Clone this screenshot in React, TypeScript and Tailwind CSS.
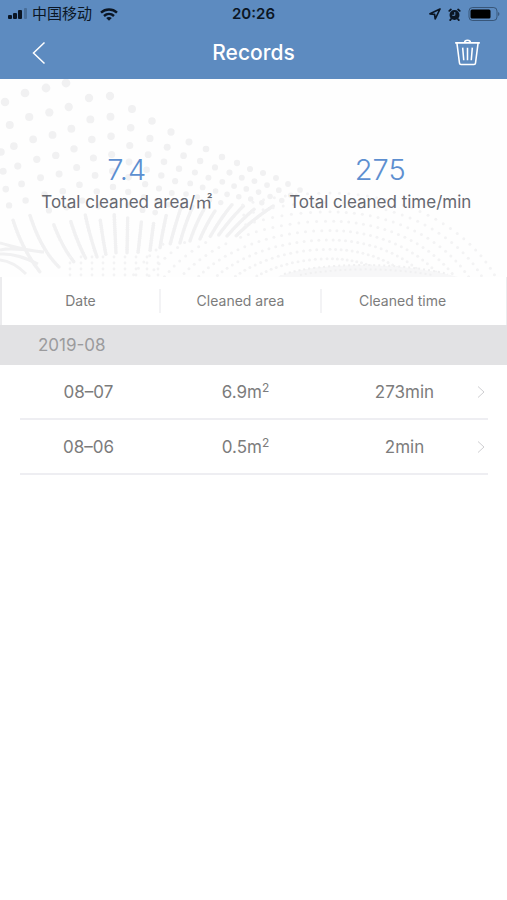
import { Fragment } from 'react';

type Strand = [number, number, number, number, number, number, number, number];
type Dot = { x: number; y: number; r: number };

const groups = [
  {
    month: '2019-08',
    records: [
      { date: '08–07', area: '6.9', time: '273min' },
      { date: '08–06', area: '0.5', time: '2min' },
    ],
  },
];

// Cubic curves (start, two handles, end) that the big dots run along
const strands: Strand[] = [
  [1, 73, 6, 126, 15, 161, 40, 193],
  [5, 23, 20, 91, 25, 156, 60, 189],
  [25, 14, 38, 86, 45, 146, 74, 183],
  [46, 9, 55, 76, 63, 136, 86, 180],
  [66, 4, 74, 76, 82, 136, 97, 178],
  [89, 19, 92, 71, 98, 136, 106, 176],
  [110, 17, 111, 71, 114, 131, 116, 175],
  [132, 30, 128, 81, 128, 131, 127, 175],
  [152, 42, 147, 81, 143, 131, 138, 174],
  [171, 53, 162, 86, 155, 131, 150, 172],
  [189, 63, 177, 91, 166, 131, 160, 169],
  [206, 70, 193, 96, 180, 126, 170, 166],
  [222, 78, 205, 103, 190, 126, 180, 164],
  [237, 84, 220, 106, 202, 126, 190, 162],
  [250, 90, 232, 109, 215, 126, 200, 160],
  [263, 94, 245, 111, 228, 126, 210, 158],
  [276, 99, 258, 113, 238, 129, 218, 157],
  [288, 105, 270, 117, 250, 131, 227, 157],
  [300, 111, 282, 121, 258, 135, 236, 157],
];

function cubic(a: number, b: number, c: number, d: number, t: number) {
  const u = 1 - t;
  return u * u * u * a + 3 * u * u * t * b + 3 * u * t * t * c + t * t * t * d;
}

// Dots shrink on the way down, then run together into a line near the fold
function strandDots(s: Strand): Dot[] {
  const dots: Dot[] = [];
  let travelled = 0;
  let next = 0;
  let px = s[0];
  let py = s[1];
  for (let i = 0; i <= 300; i++) {
    const t = i / 300;
    const x = cubic(s[0], s[2], s[4], s[6], t);
    const y = cubic(s[1], s[3], s[5], s[7], t);
    travelled += Math.hypot(x - px, y - py);
    px = x;
    py = y;
    if (travelled >= next) {
      const fold = s[0] > 200 ? 124 : 134;
      const depth = Math.min(1, Math.max(0, y / fold));
      const reach = Math.min(1, Math.max(0, (s[0] - 40) / 170));
      const solid = y > fold;
      dots.push({ x, y, r: solid ? 1.8 : 4.5 - depth * 1.4 - reach * 0.4 });
      next = travelled + (solid ? 1.5 : (25 - reach * 8) * (1 - depth * 0.42));
    }
  }
  return dots;
}

// Rows of fine dots that fan out around the low hill on the right
function fanDots(): Dot[] {
  const dots: Dot[] = [];
  for (let k = 0; k < 9; k++) {
    const scale = 1 - k * 0.068;
    const steps = 60;
    for (let i = 0; i <= steps; i++) {
      const angle = Math.PI * ((i + (k % 2) * 0.5) / steps);
      const rx = Math.cos(angle) < 0 ? 215 : 180;
      const x = 330 + Math.cos(angle) * rx * scale;
      const y = 252 - Math.sin(angle) * 138 * scale;
      if (y < 198 && !(x < 240 && y < 162)) dots.push({ x, y, r: 1.5 });
    }
  }
  return dots;
}

function footDots(): Dot[] {
  const dots: Dot[] = [];
  for (let row = 0; row < 4; row++) {
    for (let col = 0; col < 9; col++) {
      dots.push({ x: 70 + col * 11, y: 178 + row * 6, r: 1.4 });
    }
  }
  return dots;
}

const bigDots = strands.flatMap(strandDots);
const fineDots = [...fanDots(), ...footDots()];

function DotWave() {
  return (
    <svg
      viewBox="0 0 507 198"
      preserveAspectRatio="xMidYMin slice"
      className="absolute inset-0 h-full w-full"
      aria-hidden="true"
    >
      <g fill="#f1f1f2">
        {bigDots.map((d, i) => <circle key={i} cx={d.x} cy={d.y} r={d.r} />)}
      </g>
      <g fill="#f3f3f4">
        {fineDots.map((d, i) => <circle key={i} cx={d.x} cy={d.y} r={d.r} />)}
      </g>
      <path d="M0 171c12-3 28 0 42 2M0 175c14-1 26 4 38 10M0 181c10 1 18 6 26 14M0 164c12 3 26 8 44 9" fill="none" stroke="#f1f1f2" strokeWidth="3" />
      <path d="M278 198c30-14 118-17 180 0z" fill="#f7f7f8" />
      <path d="M284 195c36-11 110-13 164 0M300 196c36-7 88-8 132 0" fill="none" stroke="#f0f0f1" strokeWidth="2" strokeDasharray="2 3" />
    </svg>
  );
}

function StatusBar() {
  return (
    <div className="grid h-7 grid-cols-3 items-center px-1.5 text-[#0b1624]">
      <div className="flex items-center gap-1 pl-0.5">
        <svg width="20" height="12" viewBox="0 0 20 12" fill="currentColor" aria-hidden="true">
          <rect x="0" y="7" width="4" height="4" rx="1" />
          <rect x="5" y="5" width="4" height="6" rx="1" />
          <rect x="10" y="2" width="4" height="9" rx="1" />
          <rect x="16" y="0" width="3" height="11" rx="1" opacity="0.25" />
        </svg>
        <span className="text-[15px] leading-5 whitespace-nowrap">中国移动</span>
        <svg className="ml-1" width="18" height="13" viewBox="0 0 18 13" fill="none" stroke="currentColor" strokeWidth="2.4" aria-hidden="true">
          <path d="M1 4.600c4.500-4.200 11.500-4.200 16 0" />
          <path d="M4 8c2.900-2.700 7.100-2.700 10 0" />
          <path d="M9 12.800 6.200 10c1.600-1.400 4-1.400 5.600 0z" fill="currentColor" stroke="none" />
        </svg>
      </div>
      <span className="text-center text-[15px] leading-5 font-semibold">20:26</span>
      <div className="flex items-center justify-end gap-[7px]">
        <svg width="12" height="12" viewBox="0 0 12 12" fill="none" stroke="currentColor" strokeWidth="1.700" strokeLinejoin="round" aria-hidden="true">
          <path d="M11 1 1 5.800l4.600.6.600 4.600z" />
        </svg>
        <svg width="13" height="13" viewBox="0 0 13 13" aria-hidden="true">
          <circle cx="6.500" cy="7" r="5" fill="currentColor" />
          <path d="M1.300 2.900 2.900 1.500M11.700 2.900 10.100 1.500M3 11.100l-.8 1M10 11.100l.8 1" stroke="currentColor" strokeWidth="1.800" strokeLinecap="round" />
          <path d="M6.800 4v3.300H4.300" fill="none" stroke="#5d8bc0" strokeWidth="1" />
        </svg>
        <svg width="33" height="14" viewBox="0 0 33 14" aria-hidden="true">
          <rect x="1" y="0.500" width="28" height="13" rx="3.500" fill="none" stroke="currentColor" strokeOpacity="0.45" />
          <rect x="2.500" y="2.500" width="20" height="9" rx="1.500" fill="#000" />
          <path d="M30.200 5v4c1.600-.6 1.600-3.400 0-4z" fill="currentColor" opacity="0.500" />
        </svg>
      </div>
    </div>
  );
}

function NavBar() {
  return (
    <div className="grid h-[51px] grid-cols-3 items-center px-[26px] pb-0.5">
      <button type="button" aria-label="Back" className="flex w-6 pl-1.5 text-white">
        <svg className="shrink-0" width="14" height="24" viewBox="0 0 14 24" fill="none" stroke="currentColor" strokeWidth="1.500" aria-hidden="true">
          <path d="M12.500 1.500 1.500 12l11 10.500" />
        </svg>
      </button>
      <h1 className="text-center text-[21px] leading-6 font-medium text-white">Records</h1>
      <button type="button" aria-label="Delete records" className="flex justify-self-end text-white">
        <svg width="27" height="27" viewBox="0 0 28 28" fill="none" stroke="currentColor" strokeWidth="1.600" strokeLinejoin="round" aria-hidden="true">
          <path d="M1.200 4h25.600M11 3.700c0-3.200 6-3.200 6 0" />
          <path d="M3 4l2.700 21c.1 1 .6 1.500 1.500 1.500h13.600c.9 0 1.400-.5 1.500-1.500L25 4" />
          <path d="m9 9 1.100 13M14 9v13M19 9l-1.100 13" />
        </svg>
      </button>
    </div>
  );
}

export default function App() {
  return (
    <div className="min-h-screen bg-white font-['Inter','Noto_Sans_CJK_SC',sans-serif] text-[#7c7c7c]">
      <header className="bg-[#5d8bc0]">
        <StatusBar />
        <NavBar />
      </header>

      <section className="relative overflow-hidden bg-[#fefefe]">
        <DotWave />
        <dl className="relative grid grid-cols-2 pt-[73px] pb-[63px] text-center">
          <div className="flex flex-col-reverse gap-0.5">
            <dt className="text-[17px] leading-6 text-[#666870]">Total cleaned area/㎡</dt>
            <dd className="text-[29px] leading-9 font-light text-[#5d8fd0]">7.4</dd>
          </div>
          <div className="flex flex-col-reverse gap-0.5">
            <dt className="text-[17px] leading-6 text-[#666870]">Total cleaned time/min</dt>
            <dd className="text-[29px] leading-9 font-light text-[#5d8fd0]">275</dd>
          </div>
        </dl>
      </section>

      <table className="w-full table-fixed border-separate border-spacing-0 text-center">
        <colgroup>
          <col />
          <col />
          <col />
          <col className="w-6" />
        </colgroup>
        <thead className="text-[14px] leading-6">
          <tr>
            <th scope="col" className="border-l-2 border-[#ececee] py-3 font-normal">
              <div className="border-r-2 border-[#f3f3f5]">Date</div>
            </th>
            <th scope="col" className="py-3 font-normal">
              <div className="border-r-2 border-[#f3f3f5]">Cleaned area</div>
            </th>
            <th scope="col" className="py-3 font-normal">Cleaned time</th>
            <td className="border-r border-[#ececee]" />
          </tr>
        </thead>
        <tbody className="text-[17px] leading-6">
          {groups.map((group) => (
            <Fragment key={group.month}>
              <tr className="bg-[#e2e2e4]">
                <th scope="rowgroup" colSpan={4} className="py-2 pl-[38px] text-left font-normal text-[#9b9b9d]">
                  {group.month}
                </th>
              </tr>
              {group.records.map((row) => (
                <tr key={row.date}>
                  <td>
                    <div className="ml-5 h-[55px] border-b-2 border-[#eeeef2] pt-[15px] pr-1">{row.date}</div>
                  </td>
                  <td>
                    <div className="h-[55px] border-b-2 border-[#eeeef2] pt-[15px] pl-2">
                      {row.area}m<sup className="text-[12px]">2</sup>
                    </div>
                  </td>
                  <td>
                    <div className="h-[55px] border-b-2 border-[#eeeef2] pt-[15px] pl-1">{row.time}</div>
                  </td>
                  <td>
                    <div className="mr-[19px] flex h-[55px] items-center justify-end border-b-2 border-[#eeeef2]">
                      <button type="button" aria-label={`Open ${row.date}`} className="mr-[3px] shrink-0 text-[#cfcfd2]">
                        <svg width="8" height="14" viewBox="0 0 8 14" fill="none" stroke="currentColor" aria-hidden="true">
                          <path d="m1 1.500 6 5.500-6 5.500" />
                        </svg>
                      </button>
                    </div>
                  </td>
                </tr>
              ))}
            </Fragment>
          ))}
        </tbody>
      </table>
    </div>
  );
}
